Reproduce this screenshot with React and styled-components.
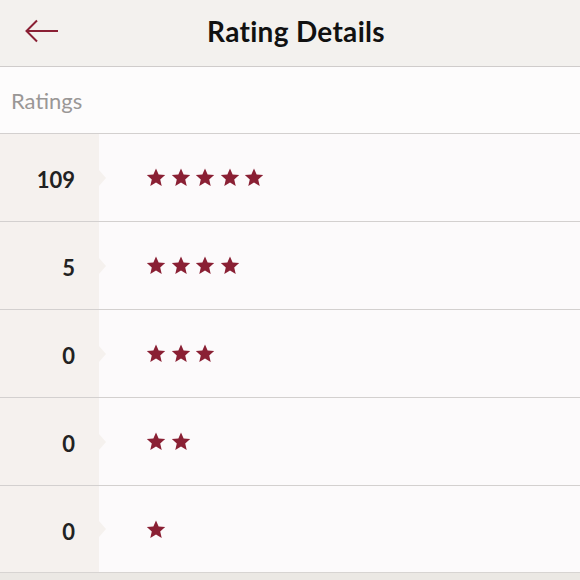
import React from 'react';
import styled, { createGlobalStyle } from 'styled-components';

const GlobalStyle = createGlobalStyle`
    html, body {
        margin: 0;
        padding: 0;
        background: #ebe8e4;
        font-family: "Lato", "Open Sans", sans-serif;
    }
`;

const rows = [
    { count: 109, stars: 5 },
    { count: 5, stars: 4 },
    { count: 0, stars: 3 },
    { count: 0, stars: 2 },
    { count: 0, stars: 1 },
];

function Star() {
    return (
        <svg width="20" height="19" viewBox="0 0 24 23">
            <path
                d="M12 0.6l3.2 7.3 7.9 0.7-6 5.3 1.8 7.8L12 17.6l-6.9 4.1 1.8-7.8-6-5.3 7.9-0.7z"
                fill="#8a2034"
            />
        </svg>
    );
}

export default function App() {
    return (
        <Page>
            <GlobalStyle />
            <Header>
                <BackButton>
                    <svg width="34" height="24" viewBox="0 0 34 24">
                        <path
                            d="M33 12H2M12 1.5L1.5 12 12 22.5"
                            fill="none"
                            stroke="#8a2034"
                            strokeWidth="2"
                        />
                    </svg>
                </BackButton>
                <Title>Rating Details</Title>
            </Header>
            <SectionLabel>Ratings</SectionLabel>
            <List>
                {rows.map((r, i) => (
                    <Row key={i}>
                        <Count>{r.count}</Count>
                        <Stars>
                            {Array.from({ length: r.stars }).map((_, j) => (
                                <Star key={j} />
                            ))}
                        </Stars>
                    </Row>
                ))}
            </List>
        </Page>
    );
}

const Page = styled.div`
    width: 580px;
    height: 580px;
    overflow: hidden;
    background: #ebe8e4;
`;

const Header = styled.div`
    height: 66px;
    background: #f3f1ee;
    border-bottom: 1.5px solid #cfcccb;
    display: flex;
    align-items: center;
    justify-content: center;
    position: relative;
`;

const BackButton = styled.div`
    position: absolute;
    left: 25px;
    top: 19px;
    display: flex;
`;

const Title = styled.h1`
    margin: 0 0 4px 12px;
    font-size: 28px;
    font-weight: 700;
    color: #111;
    letter-spacing: 0.3px;
`;

const SectionLabel = styled.div`
    height: 67px;
    box-sizing: border-box;
    padding-left: 11px;
    display: flex;
    align-items: center;
    font-size: 22px;
    color: #9a9796;
    background: #fdfcfc;
    border-bottom: 1.5px solid #d3d0cf;
`;

const List = styled.div`
    display: flex;
    flex-direction: column;
    border-bottom: 1.5px solid #d7d4d2;
`;

const Row = styled.div`
    height: 87px;
    display: flex;
    align-items: center;
    background: linear-gradient(to right, #f5f1ee 99px, #fcfafb 99px);
    position: relative;
    & + & {
        border-top: 1.5px solid #d3d0cf;
    }
    &:last-child {
        height: 86px;
    }
    &::after {
        content: '';
        position: absolute;
        left: 99px;
        top: 50%;
        margin-top: -8px;
        border-top: 8px solid transparent;
        border-bottom: 8px solid transparent;
        border-left: 7px solid #f5f1ee;
    }
`;

const Count = styled.div`
    width: 75px;
    text-align: right;
    font-size: 22px;
    font-weight: 700;
    color: #222;
    margin-top: 4px;
`;

const Stars = styled.div`
    margin-left: 71px;
    display: flex;
    gap: 4.5px;
`;
